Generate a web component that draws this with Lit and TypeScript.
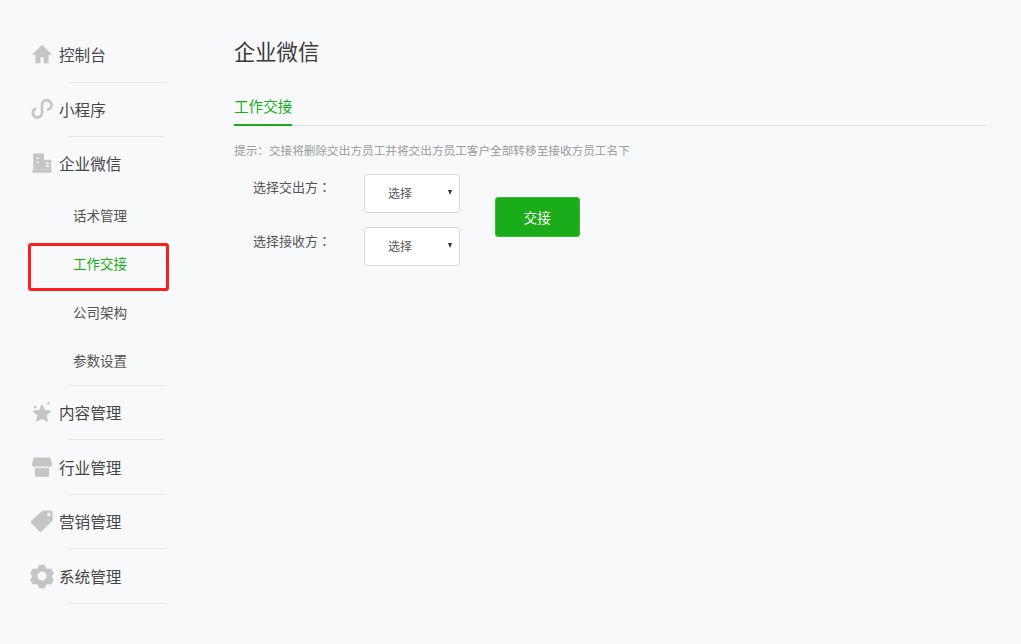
import { LitElement, html, css, svg } from "lit";
import { customElement } from "lit/decorators.js";

const icons: Record<string, unknown> = {
  home: svg`<path d="M12 2 1 12.8H4.8V22h5.6v-6.4h3.2V22h5.6V12.8H23z"/>`,
  mini: svg`<path d="M18.6 12.6A5.2 5.2 0 1 0 12 8.2V16.2A5 5 0 1 1 4.6 11.8" fill="none" stroke="currentColor" stroke-width="2.9" stroke-linecap="round"/>`,
  building: svg`<path fill-rule="evenodd" d="M2.5 1.5h11.6v17.5H2.5zM6 6v1.5h2.8V6zM6 10.5V12h2.8v-1.5z"/><path fill-rule="evenodd" d="M14.1 8.5h7.9v10.5h-7.9zM16 11.4v1.6h4v-1.6zM16 14.8v1.6h4v-1.6z"/><rect x="1.5" y="19" width="21" height="3.5" rx=".8"/>`,
  star: svg`<path d="M12 4.8 14.6 10.4 21 11.1 16.2 15.4 17.6 21.7 12 18.4 6.4 21.7 7.8 15.4 3 11.1 9.4 10.4z" stroke="currentColor" stroke-width="1.6" stroke-linejoin="round"/><circle cx="4.6" cy="6.8" r="1.5"/><circle cx="19" cy="2.4" r="1.4"/>`,
  store: svg`<path d="M4.5 1.5h15a2 2 0 0 1 2 1.6L23 9a3 3 0 0 1-5.5 1.6 3.3 3.3 0 0 1-5.5 0 3.3 3.3 0 0 1-5.5 0A3 3 0 0 1 1 9l1.5-5.9a2 2 0 0 1 2-1.6z"/><path d="M4.2 13.2a5 5 0 0 0 2.6-.6 5.6 5.6 0 0 0 5.2 0 5.6 5.6 0 0 0 5.2 0 5 5 0 0 0 2.6.6V21a1.5 1.5 0 0 1-1.5 1.5H5.7A1.5 1.5 0 0 1 4.2 21z"/>`,
  tag: svg`<g transform="translate(12 12) scale(1.06) translate(-12 -12)"><path fill-rule="evenodd" d="M13.6 1.2h7.6A1.8 1.8 0 0 1 23 3v7.6a2 2 0 0 1-.6 1.4L11.8 22.6a1.8 1.8 0 0 1-2.6 0L1 14.4a1.8 1.8 0 0 1 0-2.6L12.2 1.8a2 2 0 0 1 1.4-.6zM19 3.6a1.7 1.7 0 1 0 0 3.4 1.7 1.7 0 0 0 0-3.4z"/></g>`,
  gear: svg`<g transform="translate(12 12) scale(1.09) translate(-12 -12)"><path fill-rule="evenodd" stroke="currentColor" stroke-width="1.6" stroke-linejoin="round" d="M9.8 1.6h4.4l1.2 3 2.2 1.3 3.2-.5 2.2 3.8-2 2.5v1.6l2 2.5-2.2 3.8-3.2-.5-2.2 1.3-1.2 3H9.8l-1.2-3-2.2-1.3-3.2.5L1 15.8l2-2.5v-1.6l-2-2.5 2.2-3.8 3.2.5 2.2-1.3zM12 6.7a5.3 5.3 0 1 0 0 10.6 5.3 5.3 0 0 0 0-10.6z"/></g>`,
};

const icon = (n: string) =>
  html`<svg class="ic" viewBox="0 0 24 24" fill="currentColor">${icons[n]}</svg>`;

@customElement("app-root")
export class AppRoot extends LitElement {
  static styles = css`
    :host {
      display: flex;
      width: 1021px;
      height: 644px;
      overflow: hidden;
      background: #f8f9fb;
      font-family: "Noto Sans CJK SC", "Noto Sans", sans-serif;
      color: #444;
    }
    .side {
      width: 234px;
      flex: none;
      padding-top: 26px;
      box-sizing: border-box;
      position: relative;
    }
    .row {
      height: 53.5px;
      display: flex;
      align-items: center;
      padding-left: 31px;
      gap: 6px;
      font-size: 15.6px;
      color: #454545;
    }
    .row.first {
      height: 55.5px;
    }
    .row.parent {
      height: 52.5px;
      margin-bottom: 1px;
    }
    .ic {
      width: 22px;
      height: 22px;
      color: #c5c5c5;
      flex: none;
      overflow: visible;
    }
    .sep {
      margin-left: 68px;
      width: 98px;
      height: 1px;
      background: #e6e7ea;
    }
    .sub {
      height: 48.5px;
      display: flex;
      align-items: center;
      padding-left: 73px;
      font-size: 13.5px;
      color: #555;
      position: relative;
    }
    .sub.on {
      color: #1aad19;
    }
    .sub.on::after {
      content: "";
      position: absolute;
      left: 28px;
      top: 4px;
      width: 141px;
      height: 48px;
      box-sizing: border-box;
      border: 3px solid #fd1d1d;
      border-radius: 3px;
    }
    .main {
      flex: 1;
      padding: 36px 35px 0 0;
      min-width: 0;
    }
    h1 {
      margin: 0;
      font-size: 21.3px;
      line-height: 30px;
      font-weight: 400;
      color: #3a3a3a;
    }
    .tabs {
      margin-top: 30px;
      border-bottom: 1px solid #dcdde0;
      display: flex;
    }
    .tab {
      font-size: 14.6px;
      line-height: 20px;
      padding-bottom: 8px;
      color: #1aad19;
      border-bottom: 2px solid #1aad19;
      margin-bottom: -1px;
    }
    .hint {
      margin: 16px 0 0;
      font-size: 11.65px;
      line-height: 16px;
      color: #9a9a9a;
      white-space: nowrap;
    }
    .form {
      margin: 16px 0 0 19px;
      display: flex;
      align-items: flex-start;
    }
    .fields {
      display: flex;
      flex-direction: column;
      gap: 14px;
    }
    .field {
      display: flex;
      align-items: flex-start;
    }
    .field label {
      width: 111px;
      font-family: "Noto Sans CJK TC", "Noto Sans CJK SC", sans-serif;
      font-size: 13px;
      line-height: 18px;
      padding-top: 4px;
      color: #555;
      white-space: nowrap;
    }
    .field + .field label {
      padding-top: 5px;
    }
    .sel {
      position: relative;
      width: 96px;
      height: 39px;
    }
    select {
      appearance: none;
      width: 100%;
      height: 100%;
      box-sizing: border-box;
      background: #fff;
      border: 1px solid #d9d9d9;
      border-radius: 3px;
      padding: 0 0 2px 23px;
      font: inherit;
      font-size: 12px;
      color: #555;
    }
    .sel::after {
      content: "";
      position: absolute;
      right: 8px;
      top: 16px;
      border-style: solid;
      border-width: 5px 2.5px 0;
      border-color: #333 transparent transparent;
      pointer-events: none;
    }
    button {
      margin: 23px 0 0 35px;
      width: 84.5px;
      height: 40px;
      border: 1px solid #3cb93b;
      border-radius: 3px;
      background: #1aad19;
      color: #fff;
      font: inherit;
      font-size: 13.5px;
      padding: 0;
    }
  `;

  private item(ic: string, label: string, cls = "") {
    return html`<div class="row ${cls}">${icon(ic)}<span>${label}</span></div>`;
  }

  render() {
    return html`
      <nav class="side">
        ${this.item("home", "控制台", "first")}
        <div class="sep"></div>
        ${this.item("mini", "小程序")}
        <div class="sep"></div>
        ${this.item("building", "企业微信", "parent")}
        <div class="sub">话术管理</div>
        <div class="sub on">工作交接</div>
        <div class="sub">公司架构</div>
        <div class="sub">参数设置</div>
        <div class="sep"></div>
        ${this.item("star", "内容管理")}
        <div class="sep"></div>
        ${this.item("store", "行业管理")}
        <div class="sep"></div>
        ${this.item("tag", "营销管理")}
        <div class="sep"></div>
        ${this.item("gear", "系统管理")}
        <div class="sep"></div>
      </nav>
      <main class="main">
        <h1>企业微信</h1>
        <div class="tabs"><div class="tab">工作交接</div></div>
        <p class="hint">提示：交接将删除交出方员工并将交出方员工客户全部转移至接收方员工名下</p>
        <div class="form">
          <div class="fields">
            <div class="field">
              <label>选择交出方：</label>
              <div class="sel"><select><option>选择</option></select></div>
            </div>
            <div class="field">
              <label>选择接收方：</label>
              <div class="sel"><select><option>选择</option></select></div>
            </div>
          </div>
          <button>交接</button>
        </div>
      </main>
    `;
  }
}
